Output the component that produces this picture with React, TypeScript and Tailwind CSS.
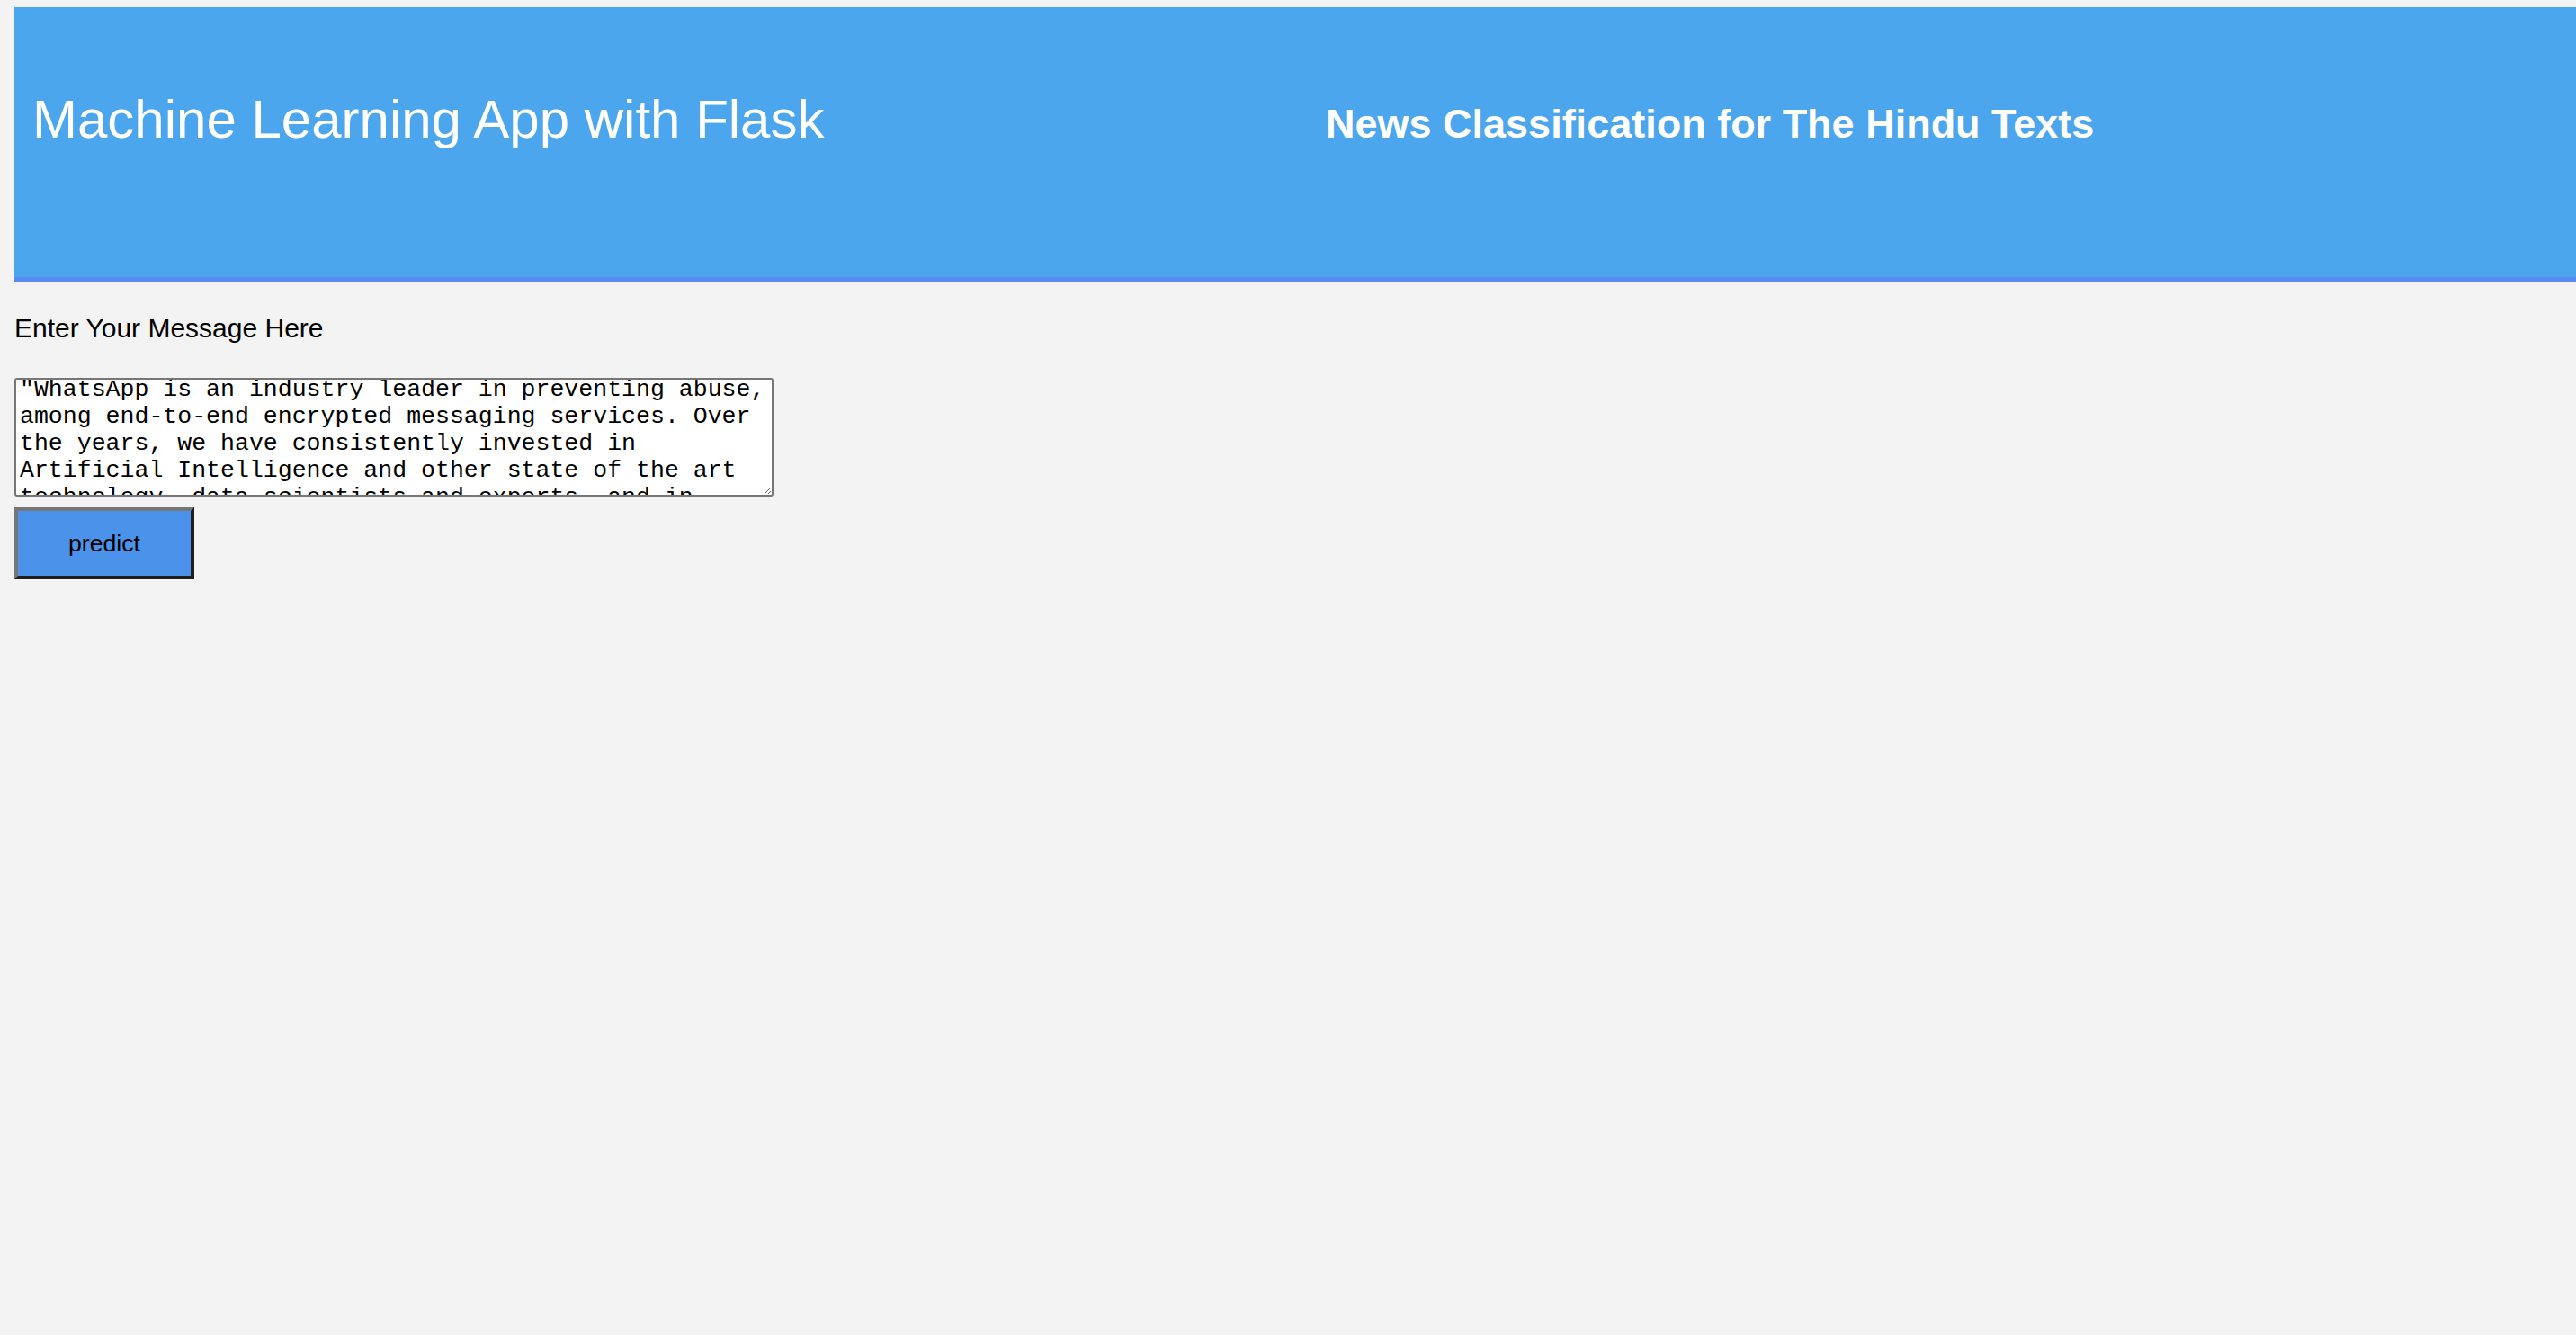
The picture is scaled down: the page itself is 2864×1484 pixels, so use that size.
import React, { useLayoutEffect, useRef } from "react";

const TEXT =
  '"WhatsApp is an industry leader in preventing abuse, among end-to-end encrypted messaging services. Over the years, we have consistently invested in Artificial Intelligence and other state of the art technology, data scientists and experts, and in processes, in order to keep our users safe on our platform."';

export default function App() {
  const ref = useRef<HTMLTextAreaElement>(null);
  useLayoutEffect(() => {
    if (ref.current) ref.current.scrollTop = 8;
  }, []);
  return (
    <div className="min-h-screen w-full overflow-hidden bg-[#f3f3f3] pt-[8px] pl-[16px] font-['Liberation_Sans',Arial,sans-serif] text-black">
      <header className="flex h-[306px] items-baseline border-b-[6px] border-[#5a8af4] bg-[#4ca6ed] pt-[95px] text-white">
        <div className="w-[1456px] shrink-0 pl-[20px] text-[60px] leading-none">
          Machine Learning App with Flask
        </div>
        <div className="pl-[2px] text-[45px] font-bold leading-none">News Classification for The Hindu Texts</div>
      </header>
      <div className="mt-[36px] text-[30px] leading-[30px]">Enter Your Message Here</div>
      <textarea
        ref={ref}
        defaultValue={TEXT}
        className="mt-[40px] block h-[132px] w-[844px] resize-y overflow-hidden rounded-[3px] border-2 border-[#767676] bg-white pt-[4px] pr-[2px] pb-[4px] pl-[4px] font-['Liberation_Mono','Courier_New',monospace] text-[26.55px] leading-[30px] text-black outline-none"
      />
      <button className="mt-[12px] block h-[80px] w-[200px] border-4 border-t-[#767676] border-l-[#767676] border-r-[#1e1e1e] border-b-[#1e1e1e] bg-[#4b92eb] text-center text-[26.67px] leading-none text-black">
        predict
      </button>
    </div>
  );
}
